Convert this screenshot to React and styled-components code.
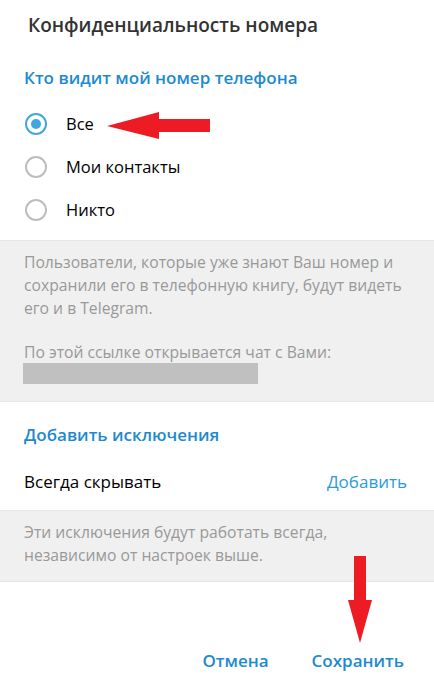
import React, { useState } from 'react';
import styled, { createGlobalStyle } from 'styled-components';

const GlobalStyle = createGlobalStyle`
    html, body {
        margin: 0;
        padding: 0;
        background: #fff;
    }
    body {
        font-family: "Open Sans", "Liberation Sans", sans-serif;
    }
`;

const Box = styled.div`
    position: relative;
    width: 434px;
    height: 686px;
    background: #fff;
    overflow: hidden;
    display: flex;
    flex-direction: column;
`;

const Title = styled.div`
    height: 50px;
    line-height: 50px;
    padding-left: 28px;
    font-size: 19px;
    font-weight: 600;
    color: #333;
`;

const SectionTitle = styled.div`
    margin-top: ${(p) => p.$top || 0}px;
    height: 28px;
    line-height: 28px;
    padding-left: 24px;
    font-size: 17px;
    font-weight: 600;
    color: #1d8ad0;
`;

const RadioList = styled.div`
    padding-top: 10px;
    margin-bottom: 9px;
`;

const RadioRow = styled.label`
    display: flex;
    align-items: center;
    height: 43px;
    padding-left: 25px;
    gap: 19px;
    font-size: 16.5px;
    color: #000;
    cursor: pointer;
`;

const RadioCircle = styled.span`
    box-sizing: border-box;
    width: 22px;
    height: 22px;
    border-radius: 50%;
    border: 2px solid ${(p) => (p.$checked ? '#40a7e3' : '#bdbdbd')};
    display: flex;
    align-items: center;
    justify-content: center;

    &::after {
        content: '';
        width: 10px;
        height: 10px;
        border-radius: 50%;
        background: #40a7e3;
        display: ${(p) => (p.$checked ? 'block' : 'none')};
    }
`;

const Hint = styled.div`
    background: #f0f0f0;
    border-top: 1px solid #e6e6e6;
    border-bottom: 1px solid #e6e6e6;
    padding: ${(p) => p.$pad};
    font-size: 15.7px;
    line-height: 23px;
    color: #999;
`;

const HintText = styled.p`
    margin: 0 0 ${(p) => p.$after || 0}px;
    padding: 0 24px;
`;

const LinkPlaceholder = styled.div`
    margin: -1px 0 0 23px;
    width: 235px;
    height: 21px;
    background: #c0c0c0;
`;

const Row = styled.div`
    display: flex;
    align-items: center;
    justify-content: space-between;
    height: 48px;
    margin: 8px 0 5px;
    padding: 0 27px 0 24px;
    font-size: 17px;
    color: #000;
`;

const RowLink = styled.span`
    color: #2a9be0;
`;

const Footer = styled.div`
    flex: 1;
    display: flex;
    justify-content: flex-end;
    align-items: flex-end;
    gap: 43px;
    padding: 0 30px 12px 0;
`;

const Button = styled.button`
    border: none;
    background: none;
    padding: 0;
    height: 28px;
    font-family: inherit;
    font-size: 17px;
    font-weight: 600;
    color: #1d8ad0;
    cursor: pointer;
`;

const Arrow = styled.svg`
    position: absolute;
    left: ${(p) => p.$x}px;
    top: ${(p) => p.$y}px;
`;

const options = ['Все', 'Мои контакты', 'Никто'];

const App = () => {
    const [selected, setSelected] = useState(0);

    return (
        <>
            <GlobalStyle />
            <Box>
                <Title>Конфиденциальность номера</Title>
                <SectionTitle $top={14}>Кто видит мой номер телефона</SectionTitle>
                <RadioList>
                    {options.map((o, i) => (
                        <RadioRow key={o} onClick={() => setSelected(i)}>
                            <RadioCircle $checked={selected === i} />
                            {o}
                        </RadioRow>
                    ))}
                </RadioList>
                <Hint $pad="10px 0 17px">
                    <HintText $after={21}>
                        Пользователи, которые уже знают Ваш номер и сохранили его в телефонную книгу, будут видеть его и в Telegram.
                    </HintText>
                    <HintText>По этой ссылке открывается чат с Вами:</HintText>
                    <LinkPlaceholder />
                </Hint>
                <SectionTitle $top={19}>Добавить исключения</SectionTitle>
                <Row>
                    Всегда скрывать
                    <RowLink>Добавить</RowLink>
                </Row>
                <Hint $pad="10px 0 14px">
                    <HintText>Эти исключения будут работать всегда, независимо от настроек выше.</HintText>
                </Hint>
                <Footer>
                    <Button>Отмена</Button>
                    <Button>Сохранить</Button>
                </Footer>

                {/* red annotation arrows */}
                <Arrow $x={106} $y={111} width="106" height="30" viewBox="0 0 106 30">
                    <polygon points="1,15 53,1 53,8 104,8 104,21 53,21 53,28" fill="#ed1c24" />
                </Arrow>
                <Arrow $x={347} $y={555} width="27" height="90" viewBox="0 0 27 90">
                    <polygon points="7,1 19,1 19,45 25,45 13,88 1,45 7,45" fill="#ed1c24" />
                </Arrow>
            </Box>
        </>
    );
};

export default App;
